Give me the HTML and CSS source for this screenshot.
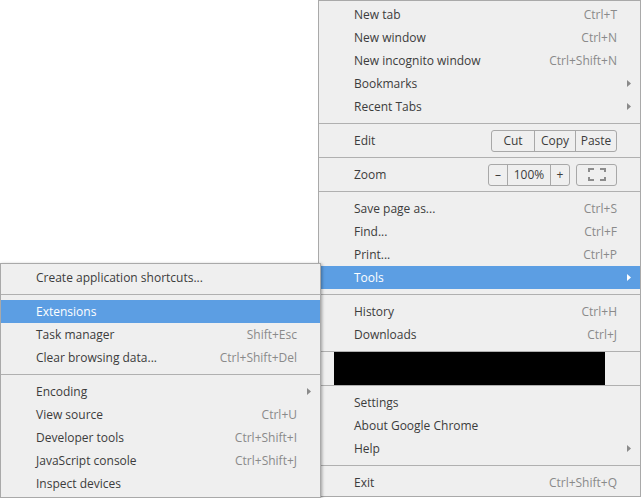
FILE: index.html
```html
<!DOCTYPE html>
<html>
<head>
<meta charset="utf-8">
<link rel="stylesheet" href="styles.css">
</head>
<body>
<div class="screen">
  <div class="menu main-menu">
    <div class="item"><span class="label">New tab</span><span class="accel">Ctrl+T</span><span class="sub"></span></div>
    <div class="item"><span class="label">New window</span><span class="accel">Ctrl+N</span><span class="sub"></span></div>
    <div class="item"><span class="label">New incognito window</span><span class="accel">Ctrl+Shift+N</span><span class="sub"></span></div>
    <div class="item"><span class="label">Bookmarks</span><span class="sub"><svg class="arrow" width="4" height="7" viewBox="0 0 4 7"><polygon points="0,0 4,3.5 0,7"/></svg></span></div>
    <div class="item"><span class="label">Recent Tabs</span><span class="sub"><svg class="arrow" width="4" height="7" viewBox="0 0 4 7"><polygon points="0,0 4,3.5 0,7"/></svg></span></div>
    <div class="sep"></div>
    <div class="item"><span class="label">Edit</span>
      <span class="btn-group">
        <span class="btn btn-cut">Cut</span><span class="btn btn-copy">Copy</span><span class="btn btn-paste">Paste</span>
      </span><span class="sub"></span></div>
    <div class="sep"></div>
    <div class="item"><span class="label">Zoom</span>
      <span class="btn-group">
        <span class="btn btn-minus">&#8211;</span><span class="btn btn-pct">100%</span><span class="btn btn-plus">+</span>
      </span>
      <span class="btn-group fs-group"><span class="btn btn-fs"><svg width="18" height="13" viewBox="0 0 18 13"><g fill="#8c8c8c"><rect x="0" y="0" width="6" height="2"/><rect x="0" y="0" width="2" height="4"/><rect x="12" y="0" width="6" height="2"/><rect x="16" y="0" width="2" height="4"/><rect x="0" y="11" width="6" height="2"/><rect x="0" y="9" width="2" height="4"/><rect x="12" y="11" width="6" height="2"/><rect x="16" y="9" width="2" height="4"/></g></svg></span></span><span class="sub"></span></div>
    <div class="sep"></div>
    <div class="item"><span class="label">Save page as...</span><span class="accel">Ctrl+S</span><span class="sub"></span></div>
    <div class="item"><span class="label">Find...</span><span class="accel">Ctrl+F</span><span class="sub"></span></div>
    <div class="item"><span class="label">Print...</span><span class="accel">Ctrl+P</span><span class="sub"></span></div>
    <div class="item active"><span class="label">Tools</span><span class="sub"><svg class="arrow" width="4" height="7" viewBox="0 0 4 7"><polygon points="0,0 4,3.5 0,7"/></svg></span></div>
    <div class="sep"></div>
    <div class="item"><span class="label">History</span><span class="accel">Ctrl+H</span><span class="sub"></span></div>
    <div class="item"><span class="label">Downloads</span><span class="accel">Ctrl+J</span><span class="sub"></span></div>
    <div class="sep sep-tight"></div>
    <div class="redacted"></div>
    <div class="sep sep-tight-top"></div>
    <div class="item"><span class="label">Settings</span><span class="sub"></span></div>
    <div class="item"><span class="label">About Google Chrome</span><span class="sub"></span></div>
    <div class="item"><span class="label">Help</span><span class="sub"><svg class="arrow" width="4" height="7" viewBox="0 0 4 7"><polygon points="0,0 4,3.5 0,7"/></svg></span></div>
    <div class="sep"></div>
    <div class="item"><span class="label">Exit</span><span class="accel">Ctrl+Shift+Q</span><span class="sub"></span></div>
  </div>

  <div class="menu tools-menu">
    <div class="item"><span class="label">Create application shortcuts...</span><span class="sub"></span></div>
    <div class="sep"></div>
    <div class="item active"><span class="label">Extensions</span><span class="sub"></span></div>
    <div class="item"><span class="label">Task manager</span><span class="accel">Shift+Esc</span><span class="sub"></span></div>
    <div class="item"><span class="label">Clear browsing data...</span><span class="accel">Ctrl+Shift+Del</span><span class="sub"></span></div>
    <div class="sep"></div>
    <div class="item"><span class="label">Encoding</span><span class="sub"><svg class="arrow" width="4" height="7" viewBox="0 0 4 7"><polygon points="0,0 4,3.5 0,7"/></svg></span></div>
    <div class="item"><span class="label">View source</span><span class="accel">Ctrl+U</span><span class="sub"></span></div>
    <div class="item"><span class="label">Developer tools</span><span class="accel">Ctrl+Shift+I</span><span class="sub"></span></div>
    <div class="item"><span class="label">JavaScript console</span><span class="accel">Ctrl+Shift+J</span><span class="sub"></span></div>
    <div class="item"><span class="label">Inspect devices</span><span class="sub"></span></div>
  </div>
</div>
</body>
</html>
```

FILE: styles.css
```css
html, body {
  margin: 0;
  padding: 0;
  background: #ffffff;
}
.screen {
  position: relative;
  width: 641px;
  height: 498px;
  overflow: hidden;
  font-family: "Open Sans", "Noto Sans", sans-serif;
  font-size: 12px;
  color: #3c3c3c;
}
.menu {
  position: absolute;
  background: #efefef;
  border: 1px solid #a9a9a9;
  padding: 2px 0;
  box-sizing: border-box;
}
.main-menu {
  left: 318px;
  top: 0;
  width: 323px;
  height: 497px;
}
.tools-menu {
  left: 0;
  top: 263px;
  width: 321px;
  height: 235px;
  box-shadow: 1px 1px 3px rgba(0, 0, 0, 0.35);
}
.item {
  display: flex;
  align-items: center;
  height: 23px;
  padding: 0 9px 0 35px;
  white-space: nowrap;
}
.label {
  flex: 1;
}
.accel {
  color: #8a8a8a;
}
.sub {
  width: 14px;
  display: flex;
  justify-content: flex-end;
  align-items: center;
}
.arrow {
  fill: #8a8a8a;
  display: block;
}
.item.active {
  background: #5c9ee3;
  color: #ffffff;
}
.item.active .arrow {
  fill: #ffffff;
}
.sep {
  height: 1px;
  background: #b0b0b0;
  margin: 5px 0;
}
.sep-tight {
  margin-bottom: 0;
}
.sep-tight-top {
  margin-top: 0;
}
.redacted {
  height: 33px;
  width: 271px;
  margin-left: 15px;
  background: #000000;
}
.btn-group {
  display: flex;
  height: 22px;
  border: 1px solid #a8a8a8;
  border-radius: 3px;
  box-sizing: border-box;
}
.btn {
  display: flex;
  align-items: center;
  justify-content: center;
  border-left: 1px solid #a8a8a8;
}
.btn:first-child {
  border-left: none;
}
.btn-cut { width: 42px; }
.btn-copy { width: 40px; }
.btn-paste { width: 40px; }
.btn-minus { width: 18px; }
.btn-pct { width: 42px; }
.btn-plus { width: 18px; }
.fs-group {
  margin-left: 6px;
}
.btn-fs {
  width: 39px;
}
```
